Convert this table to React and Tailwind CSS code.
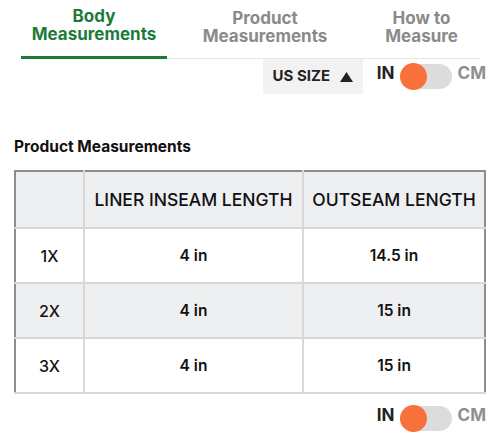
import React from 'react';

function UnitToggle() {
  return (
    <div className="flex items-center">
      <span className="text-[17px] font-bold text-[#222] mr-[5px] -mt-[6px]">IN</span>
      <div className="relative w-[52px] h-[25px] rounded-full bg-[#dcdcdc]">
        <div className="absolute left-0 -top-[1px] w-[27px] h-[27px] rounded-full bg-[#f8703b]" />
      </div>
      <span className="text-[17px] font-bold text-[#8e8e8e] ml-[6px] -mt-[6px]">CM</span>
    </div>
  );
}

const rows = [
  { size: '1X', liner: '4 in', outseam: '14.5 in', shade: false },
  { size: '2X', liner: '4 in', outseam: '15 in', shade: true },
  { size: '3X', liner: '4 in', outseam: '15 in', shade: false },
];

export default function App() {
  return (
    <div className="w-[500px] h-[436px] bg-white overflow-hidden" style={{ fontFamily: 'Inter, "Noto Sans", sans-serif' }}>
      {/* tabs */}
      <div className="flex ml-[21px] mr-[20px] pt-[7px] border-b border-[#e6e6e6]">
        <div className="w-[146px] h-[52px] flex items-start justify-center text-center text-[17px] leading-[18px] font-bold text-[#1d7b3a] border-b-[3px] border-[#1d7b3a] -mb-[1px]">
          Body<br />Measurements
        </div>
        <div className="w-[196px] flex items-start justify-center text-center text-[17px] leading-[18px] font-bold text-[#8a8a8a] pt-[2px]">
          Product<br />Measurements
        </div>
        <div className="flex-1 flex items-start justify-center text-center text-[17px] leading-[18px] font-bold text-[#8a8a8a] pt-[2px]">
          How to<br />Measure
        </div>
      </div>

      {/* size + unit */}
      <div className="flex justify-end items-center mr-[14px]">
        <div className="w-[100px] h-[35px] bg-[#f2f2f2] flex items-center justify-center gap-[10px] mr-[14px]">
          <span className="text-[15px] font-bold text-[#222]">US SIZE</span>
          <svg width="13" height="10" viewBox="0 0 13 10"><path d="M6.5 0 L13 10 L0 10 Z" fill="#222" /></svg>
        </div>
        <UnitToggle />
      </div>

      <div className="px-[14px]">
        <h2 className="text-[15.5px] font-bold text-[#111] mt-[41px] mb-[12px]">Product Measurements</h2>
        <table className="w-full border-collapse border-2 border-[#8d8d8d] text-[#111]">
          <thead>
            <tr className="bg-[#eeeff1] h-[57px]">
              <th className="w-[69px] border-2 border-[#d8d8d8] border-l-[#8d8d8d] border-t-[#8d8d8d]"></th>
              <th className="w-[219px] border-2 border-[#d8d8d8] border-t-[#8d8d8d] text-[17.5px] font-medium">LINER INSEAM LENGTH</th>
              <th className="border-2 border-[#d8d8d8] border-t-[#8d8d8d] border-r-[#8d8d8d] text-[17.5px] font-medium">OUTSEAM LENGTH</th>
            </tr>
          </thead>
          <tbody>
            {rows.map((r) => (
              <tr key={r.size} className={`h-[55px] ${r.shade ? 'bg-[#eeeff1]' : 'bg-white'}`}>
                <td className="border-2 border-[#d8d8d8] border-l-[#8d8d8d] text-center text-[16px] font-medium">{r.size}</td>
                <td className="border-2 border-[#d8d8d8] text-center text-[15.5px] font-semibold">{r.liner}</td>
                <td className="border-2 border-[#d8d8d8] border-r-[#8d8d8d] text-center text-[15.5px] font-semibold">{r.outseam}</td>
              </tr>
            ))}
          </tbody>
        </table>
      </div>

      <div className="flex justify-end mr-[14px] mt-[12px]">
        <UnitToggle />
      </div>
    </div>
  );
}
